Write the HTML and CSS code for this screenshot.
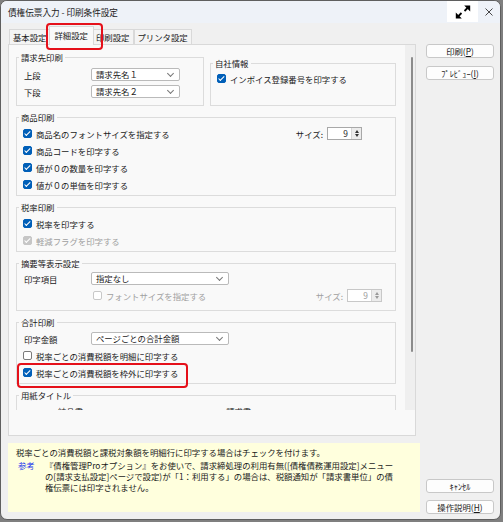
FILE: index.html
```html
<!DOCTYPE html>
<html lang="ja">
<head>
    <meta charset="UTF-8">
    <title>債権伝票入力 - 印刷条件設定</title>
    <link rel="stylesheet" href="styles.css">
</head>
<body>
    <div class="window">
        <div class="titlebar">
            <span class="title">債権伝票入力 - 印刷条件設定</span>
            <span class="tb-max">
                <svg width="16" height="14" viewBox="0 0 16 14">
                    <path d="M13 2.5 L9.5 6 M3 11.5 L6.5 8" stroke="#000" stroke-width="1.8" fill="none"/>
                    <path d="M9.2 0.6 H15.2 V6.4 Z M0.8 7.6 V13.4 H6.8 Z" fill="#000"/>
                </svg>
            </span>
            <span class="tb-close">
                <svg width="8" height="8" viewBox="0 0 8 8">
                    <path d="M0.5 0.5 L7.5 7.5 M7.5 0.5 L0.5 7.5" stroke="#333" stroke-width="0.9"/>
                </svg>
            </span>
        </div>

        <div class="content">
            <div class="left">
                <div class="tabs">
                    <span class="tab">基本設定</span>
                    <span class="tab active">詳細設定</span>
                    <span class="tab">印刷設定</span>
                    <span class="tab">プリンタ設定</span>
                </div>

                <div class="panel">
                    <div class="scroll">
                        <div class="pair">
                            <fieldset class="group g-bill">
                                <legend>請求先印刷</legend>
                                <div class="row">
                                    <span class="label">上段</span>
                                    <span class="select sel-short">請求先名１</span>
                                </div>
                                <div class="row">
                                    <span class="label">下段</span>
                                    <span class="select sel-short">請求先名２</span>
                                </div>
                            </fieldset>
                            <fieldset class="group g-company">
                                <legend>自社情報</legend>
                                <div class="row"><span class="cb on"></span>インボイス登録番号を印字する</div>
                            </fieldset>
                        </div>

                        <fieldset class="group g-item">
                            <legend>商品印刷</legend>
                            <div class="row">
                                <span class="cb on"></span>商品名のフォントサイズを指定する
                                <span class="size size-item">サイズ:<span class="spin"><span class="val">9</span><span class="arr"><i class="up"></i><i class="down"></i></span></span></span>
                            </div>
                            <div class="row"><span class="cb on"></span>商品コードを印字する</div>
                            <div class="row"><span class="cb on"></span>値が０の数量を印字する</div>
                            <div class="row"><span class="cb on"></span>値が０の単価を印字する</div>
                        </fieldset>

                        <fieldset class="group g-tax">
                            <legend>税率印刷</legend>
                            <div class="row"><span class="cb on"></span>税率を印字する</div>
                            <div class="row disabled"><span class="cb dis-on"></span>軽減フラグを印字する</div>
                        </fieldset>

                        <fieldset class="group g-memo">
                            <legend>摘要等表示設定</legend>
                            <div class="row">
                                <span class="label">印字項目</span>
                                <span class="select sel-long">指定なし</span>
                            </div>
                            <div class="row disabled indent">
                                <span class="cb dis"></span>フォントサイズを指定する
                                <span class="size size-memo">サイズ:<span class="spin off"><span class="val">9</span><span class="arr"><i class="up"></i><i class="down"></i></span></span></span>
                            </div>
                        </fieldset>

                        <fieldset class="group g-total">
                            <legend>合計印刷</legend>
                            <div class="row">
                                <span class="label">印字金額</span>
                                <span class="select sel-long">ページごとの合計金額</span>
                            </div>
                            <div class="row"><span class="cb"></span>税率ごとの消費税額を明細に印字する</div>
                            <div class="row marked"><span class="cb on"></span>税率ごとの消費税額を枠外に印字する</div>
                        </fieldset>

                        <fieldset class="group g-paper">
                            <legend>用紙タイトル</legend>
                            <div class="row">
                                <span class="paper-a">納品書</span>
                                <span class="paper-b">請求書</span>
                            </div>
                        </fieldset>
                    </div>
                    <div class="sbar"><div class="thumb"></div></div>
                </div>

                <div class="help">
                    <div class="help-line">税率ごとの消費税額と課税対象額を明細行に印字する場合はチェックを付けます。</div>
                    <div class="ref">
                        <span class="ref-tag">参考</span>
                        <div class="ref-text">
                            <div class="help-line">『債権管理Proオプション』をお使いで、請求締処理の利用有無([債権債務運用設定]メニュー</div>
                            <div class="help-line">の[請求支払設定]ページで設定)が「1：利用する」の場合は、税額通知が「請求書単位」の債</div>
                            <div class="help-line">権伝票には印字されません。</div>
                        </div>
                    </div>
                </div>
            </div>

            <div class="right">
                <button class="btn">印刷(<u>P</u>)</button>
                <button class="btn">ﾌﾟﾚﾋﾞｭｰ(<u>I</u>)</button>
                <button class="btn btn-bottom">ｷｬﾝｾﾙ</button>
                <button class="btn">操作説明(<u>H</u>)</button>
            </div>
        </div>
    </div>
</body>
</html>
```

FILE: styles.css
```css
* {
    margin: 0;
    padding: 0;
    box-sizing: border-box;
}

body {
    background-color: #7f7f7f;
    font-family: "Noto Sans CJK JP", "Noto Sans", sans-serif;
    font-size: 8.4px;
    color: #1a1a1a;
}

.window {
    width: 501px;
    height: 520px;
    background-color: #f0f0f0;
    border: 1px solid #5f5f5f;
    border-radius: 7px;
    overflow: hidden;
    display: flex;
    flex-direction: column;
}

/* title bar */
.titlebar {
    height: 22px;
    flex: none;
    display: flex;
    align-items: center;
    background-color: #eef2f8;
}

.title {
    padding-left: 7px;
    font-size: 8.6px;
}

.tb-max {
    margin-left: auto;
    align-self: flex-start;
    width: 31px;
    height: 21px;
    background-color: #fff;
    display: flex;
    align-items: center;
    justify-content: center;
}

.tb-close {
    width: 22px;
    display: flex;
    justify-content: center;
}

/* main area */
.content {
    flex: 1;
    display: flex;
    padding-left: 7px;
}

.left {
    width: 412px;
    display: flex;
    flex-direction: column;
    padding-bottom: 7px;
}

.tabs {
    height: 21px;
    flex: none;
    display: flex;
    align-items: flex-end;
    padding-left: 1px;
}

.tab {
    height: 15px;
    line-height: 14px;
    padding: 0 3px;
    border: 1px solid #d9d9d9;
    border-bottom: none;
    background-color: #f4f4f4;
    white-space: nowrap;
}

.tab.active {
    position: relative;
    z-index: 1;
    height: 19px;
    line-height: 17px;
    padding: 0 5px;
    margin: 0 -2px -1px;
    background-color: #f9f9f9;
}

.tab.active::after {
    content: "";
    position: absolute;
    left: -4px;
    top: -4px;
    width: 53px;
    height: 23px;
    border: 2.5px solid #e5101a;
    border-radius: 4px;
}

.panel {
    width: 408px;
    height: 392px;
    flex: none;
    display: flex;
    align-items: flex-start;
    background-color: #f9f9f9;
    border: 1px solid #d9d9d9;
}

.scroll {
    width: 396px;
    height: 365px;
    overflow: hidden;
    padding: 7px 9px 0 7px;
}

.sbar {
    width: 10px;
    height: 365px;
    background-color: #efefef;
}

.thumb {
    width: 2px;
    height: 295px;
    margin: 12px 0 0 6px;
    background-color: #8b8b8b;
    border-radius: 1px;
}

/* group boxes */
.pair {
    display: flex;
    gap: 6px;
}

.group {
    min-width: 0;
    border: 1px solid #dcdcdc;
    padding: 2px 6px 2px 6px;
}

.group + .group,
.pair + .group {
    margin-top: 6px;
}

.group legend {
    line-height: 11px;
    padding: 0 2px;
    margin-left: -4px;
}

.g-bill {
    width: 188px;
    padding-top: 3px;
    padding-bottom: 5px;
}

.g-company {
    width: 186px;
    padding-top: 1px;
}

.g-memo {
    padding-top: 1px;
    padding-bottom: 6px;
}

.g-paper {
    padding-top: 1px;
}

.row {
    height: 17px;
    display: flex;
    align-items: center;
    white-space: nowrap;
}

.row.disabled {
    color: #a0a0a0;
}

.row.indent {
    padding-left: 70px;
}

.row.marked {
    position: relative;
}

.row.marked::after {
    content: "";
    position: absolute;
    left: -6px;
    top: -1px;
    width: 167px;
    height: 21px;
    border: 2.5px solid #e5101a;
    border-radius: 4px;
}

.label {
    width: 68px;
    padding-left: 1px;
}

.select {
    position: relative;
    height: 13px;
    line-height: 11px;
    padding-left: 4px;
    background-color: #fff;
    border: 1px solid #bababa;
    border-radius: 2px;
}

.select::after {
    content: "";
    position: absolute;
    right: 6px;
    top: 2px;
    width: 4px;
    height: 4px;
    border: solid #777;
    border-width: 0 1px 1px 0;
    transform: rotate(45deg);
}

.sel-short {
    width: 89px;
}

.sel-long {
    width: 138px;
}

/* checkboxes */
.cb {
    position: relative;
    flex: none;
    width: 9px;
    height: 9px;
    margin-right: 4px;
    background-color: #fff;
    border: 1px solid #7a7a7a;
    border-radius: 2px;
}

.cb.on {
    background-color: #005fb8;
    border-color: #005fb8;
}

.cb.dis-on {
    background-color: #c6c6c6;
    border-color: #c6c6c6;
}

.cb.dis {
    border-color: #c8c8c8;
}

.cb.on::after,
.cb.dis-on::after {
    content: "";
    position: absolute;
    left: 2.3px;
    top: 0.4px;
    width: 2.4px;
    height: 4.6px;
    border: solid #fff;
    border-width: 0 1.2px 1.2px 0;
    transform: rotate(45deg);
}

/* font size spinners */
.size {
    margin-left: auto;
    display: flex;
    align-items: center;
    gap: 4px;
}

.size-item {
    margin-right: 27px;
}

.size-memo {
    margin-right: 7px;
}

.spin {
    width: 35px;
    height: 13px;
    display: flex;
    background-color: #fff;
    border: 1px solid #a8a8a8;
    color: #1a1a1a;
}

.spin.off {
    border-color: #c8c8c8;
    color: #9a9a9a;
}

.spin .val {
    flex: 1;
    text-align: right;
    padding-right: 3px;
    line-height: 11px;
}

.spin .arr {
    width: 10px;
    display: flex;
    flex-direction: column;
    align-items: center;
    justify-content: center;
    gap: 1px;
    background-color: #ececec;
    border-left: 1px solid #d6d6d6;
}

.arr i {
    width: 0;
    height: 0;
    border-left: 2.5px solid transparent;
    border-right: 2.5px solid transparent;
}

.arr .up {
    border-bottom: 3px solid #333;
}

.arr .down {
    border-top: 3px solid #333;
}

.spin.off .arr .up {
    border-bottom-color: #999;
}

.spin.off .arr .down {
    border-top-color: #999;
}

.paper-a {
    margin-left: 35px;
}

.paper-b {
    margin-left: 143px;
}

/* help text */
.help {
    margin-top: 7px;
    height: 69px;
    flex: none;
    padding: 4px 0 0 8px;
    background-color: #ffffdd;
}

.help-line {
    line-height: 11px;
    white-space: nowrap;
}

.ref {
    display: flex;
    margin-top: 2px;
}

.ref-tag {
    width: 29px;
    padding-left: 2px;
    line-height: 11px;
    color: #1f3bef;
}

/* buttons */
.right {
    width: 68px;
    margin-left: 6px;
    display: flex;
    flex-direction: column;
    padding: 21px 0 5px;
}

.btn {
    height: 14px;
    line-height: 12px;
    font-family: inherit;
    font-size: 8.4px;
    color: #1a1a1a;
    background-color: #fdfdfd;
    border: 1px solid #c8c8c8;
    border-radius: 3px;
}

.btn + .btn {
    margin-top: 8px;
}

.btn + .btn-bottom {
    margin-top: auto;
}

.btn-bottom + .btn {
    margin-top: 7px;
}
```
